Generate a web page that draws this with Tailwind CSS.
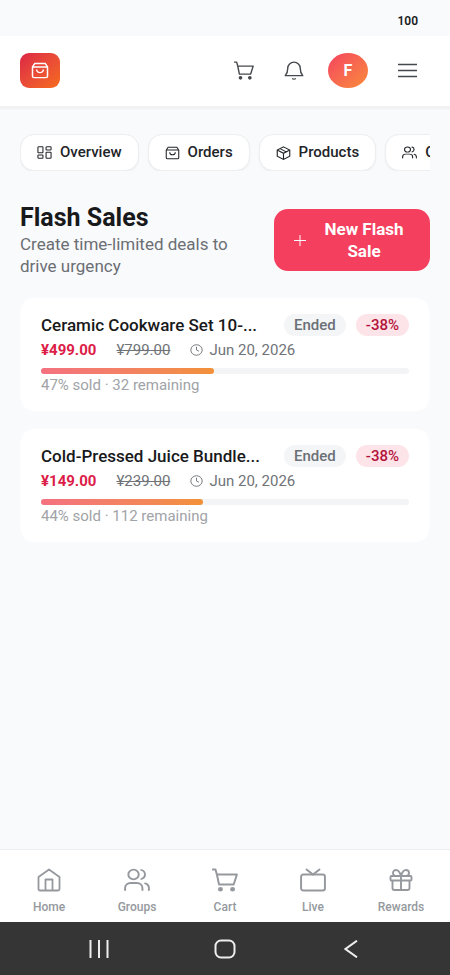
<!DOCTYPE html>
<html lang="en">
<head>
<meta charset="utf-8">
<meta name="viewport" content="width=device-width, initial-scale=1">
<title>Flash Sales</title>
<script src="https://cdn.jsdelivr.net/npm/@tailwindcss/browser@4"></script>
</head>
<body class="bg-[#f9fafc] font-[Roboto,sans-serif] text-[#18191b]">
<svg class="hidden" aria-hidden="true">
  <symbol id="bag" viewBox="0 0 24 24" preserveAspectRatio="none"><path d="M5 2h14l3 5v13a2 2 0 0 1-2 2H4a2 2 0 0 1-2-2V7zM2 7h20M7.500 10.500a4.500 4.500 0 0 0 9 0"/></symbol>
  <symbol id="cart" viewBox="0 0 24 24" preserveAspectRatio="none"><path d="M.5 1.500h2.700l1.300 5L6.500 16.500h13.500L23 6.500H4.500" stroke-linejoin="round" stroke-linecap="round"/><circle cx="7.800" cy="21.300" r="1.400" fill="currentColor"/><circle cx="19" cy="21.300" r="1.400" fill="currentColor"/></symbol>
  <symbol id="users" viewBox="0 0 24 24" preserveAspectRatio="none"><circle cx="8.800" cy="6.500" r="4.800"/><path d="M1 22v-2a5 5 0 0 1 5-5h6a5 5 0 0 1 5 5v2M16 2a4.700 4.700 0 0 1 0 9M19.500 15.300a5 5 0 0 1 3.500 4.700v2" stroke-linecap="round"/></symbol>
  <symbol id="clock" viewBox="0 0 24 24" preserveAspectRatio="none"><circle cx="12" cy="12" r="10.500"/><path d="M12 5.500V12l4.500 2.500"/></symbol>
</svg>
<div class="flex min-h-screen flex-col">
  <div class="flex h-9 items-center justify-end px-8 pt-[6px] text-[12px] font-semibold">100</div>
  <header class="flex items-center justify-between border-b-2 border-[#f0f2f4] bg-white px-5 pt-[17px] pb-[18px] shadow-xs">
    <a href="#" aria-label="Shop home" class="flex h-[35px] w-10 items-center justify-center rounded-[9px] bg-linear-to-br from-[#dc2344] to-[#f66a18] text-white">
      <svg class="h-[17px] w-[18px] fill-none stroke-current stroke-2"><use href="#bag"/></svg>
    </a>
    <div class="flex items-center text-[#45484d]">
      <button aria-label="Cart" class="mr-[30px] flex h-[35px] w-5 items-center justify-center"><svg class="h-[19px] w-5 fill-none stroke-current stroke-[1.7]"><use href="#cart"/></svg></button>
      <button aria-label="Notifications" class="mr-6 flex h-[35px] w-5 items-center justify-center"><svg class="h-[19px] w-5 fill-none stroke-current stroke-[1.7]" viewBox="0 0 24 24" preserveAspectRatio="none"><path d="M1.500 18.500c2.500-3 3-5 3-9.500a7.500 7.500 0 0 1 15 0c0 4.500.5 6.500 3 9.500zM9.800 22a3 3 0 0 0 4.400 0" stroke-linejoin="round"/></svg></button>
      <button aria-label="Account" class="mr-[30px] h-[35px] w-10 rounded-[50%] bg-linear-to-br from-[#f43f5e] to-[#f98a35] text-base font-bold text-white">F</button>
      <button aria-label="Menu" class="mr-[13px] flex h-[35px] w-[19px] items-center justify-center"><svg class="h-[15px] w-[19px] fill-none stroke-current stroke-[1.4]" viewBox="0 0 19 15"><path d="M0 1.500h19M0 7.500h19M0 13.500h19"/></svg></button>
    </div>
  </header>

  <main class="flex-1 px-5 pt-[26px]">
    <nav aria-label="Store sections" class="flex gap-[9px] overflow-hidden text-[15px] font-medium text-[#222428]">
      <a href="#" class="flex h-[37px] shrink-0 items-center gap-2 rounded-[14px] border border-[#eceef0] bg-white px-4 shadow-xs"><svg class="h-[13px] w-[15px] fill-none stroke-current stroke-[1.7]" viewBox="0 0 24 24" preserveAspectRatio="none"><rect x="1.500" y="1.500" width="8" height="11" rx="1"/><rect x="14.500" y="1.500" width="8" height="6" rx="1"/><rect x="14.500" y="11.500" width="8" height="11" rx="1"/><rect x="1.500" y="16.500" width="8" height="6" rx="1"/></svg>Overview</a>
      <a href="#" class="flex h-[37px] shrink-0 items-center gap-2 rounded-[14px] border border-[#eceef0] bg-white px-4 shadow-xs"><svg class="h-[14px] w-[15px] fill-none stroke-current stroke-[1.7]"><use href="#bag"/></svg>Orders</a>
      <a href="#" class="flex h-[37px] shrink-0 items-center gap-2 rounded-[14px] border border-[#eceef0] bg-white px-4 shadow-xs"><svg class="h-[14px] w-[15px] fill-none stroke-current stroke-[1.8]" viewBox="0 0 24 24" preserveAspectRatio="none"><path d="M12 1.500 22 7v10.500L12 23 2 17.500V7zM2 7l10 5.500L22 7M12 12.500V23M6.500 4.500l10.500 6"/></svg>Products</a>
      <a href="#" class="flex h-[37px] shrink-0 items-center gap-2 rounded-[14px] border border-[#eceef0] bg-white px-4 shadow-xs"><svg class="h-[13px] w-[15px] fill-none stroke-current stroke-[1.8]"><use href="#users"/></svg>Customers</a>
    </nav>

    <section class="mt-8 flex items-center justify-between gap-6">
      <div>
        <h1 class="text-[25px] leading-[30px] font-bold">Flash Sales</h1>
        <p class="text-[17px] leading-[22px] text-[#6b6e73]">Create time-limited deals to drive urgency</p>
      </div>
      <button class="flex w-[156px] shrink-0 items-center gap-3 rounded-[14px] bg-[#f43f5e] px-5 py-[9px] text-[17px] leading-[22px] font-bold text-white">
        <svg class="h-[11px] w-3 shrink-0 fill-none stroke-current stroke-1" viewBox="0 0 12 11" aria-hidden="true"><path d="M6 0v11M0 5.500h12"/></svg>
        <span class="flex-1">New Flash Sale</span>
      </button>
    </section>

    <div class="mt-5 flex flex-col gap-4">
      <article class="rounded-[14px] border border-[#fbfcfd] bg-white px-5 pt-4 pb-[15px]">
        <div class="flex h-[22px] items-center gap-[10px] text-[15px] font-medium">
          <h2 class="min-w-0 flex-1 truncate text-[17px] leading-[22px] font-medium">Ceramic Cookware Set 10-...</h2>
          <span class="rounded-full bg-[#f4f5f6] px-[10px] leading-[22px] text-[#6b7077]">Ended</span>
          <span class="rounded-full bg-[#fde4e8] px-[10px] leading-[22px] text-[#b3123b]">-38%</span>
        </div>
        <div class="mt-1 flex items-center gap-5 text-[15px] leading-5 text-[#707378]">
          <span class="font-bold text-[#dc1d48]">¥499.00</span>
          <s>¥799.00</s>
          <span class="flex items-center gap-[6px]"><svg class="h-3 w-[13px] fill-none stroke-current stroke-[1.8]"><use href="#clock"/></svg>Jun 20, 2026</span>
        </div>
        <div class="mt-2 h-[6px] rounded-full bg-[#f3f4f5]"><div class="h-full rounded-full bg-linear-to-r from-[#f4717f] to-[#f29139]" style="width:47%"></div></div>
        <p class="text-[15px] leading-[22px] text-[#a0a3a7]">47% sold · 32 remaining</p>
      </article>
      <article class="rounded-[14px] border border-[#fbfcfd] bg-white px-5 pt-4 pb-[15px]">
        <div class="flex h-[22px] items-center gap-[10px] text-[15px] font-medium">
          <h2 class="min-w-0 flex-1 truncate text-[17px] leading-[22px] font-medium">Cold-Pressed Juice Bundle...</h2>
          <span class="rounded-full bg-[#f4f5f6] px-[10px] leading-[22px] text-[#6b7077]">Ended</span>
          <span class="rounded-full bg-[#fde4e8] px-[10px] leading-[22px] text-[#b3123b]">-38%</span>
        </div>
        <div class="mt-1 flex items-center gap-5 text-[15px] leading-5 text-[#707378]">
          <span class="font-bold text-[#dc1d48]">¥149.00</span>
          <s>¥239.00</s>
          <span class="flex items-center gap-[6px]"><svg class="h-3 w-[13px] fill-none stroke-current stroke-[1.8]"><use href="#clock"/></svg>Jun 20, 2026</span>
        </div>
        <div class="mt-2 h-[6px] rounded-full bg-[#f3f4f5]"><div class="h-full rounded-full bg-linear-to-r from-[#f4717f] to-[#f29139]" style="width:44%"></div></div>
        <p class="text-[15px] leading-[22px] text-[#a0a3a7]">44% sold · 112 remaining</p>
      </article>
    </div>
  </main>

  <nav aria-label="Main" class="grid grid-cols-5 border-t border-[#eceef0] bg-white px-[5px] pt-[18px] pb-[7px] text-[12px] leading-4 font-medium text-[#95999e]">
    <a href="#" class="flex flex-col items-center gap-[7px]"><svg class="h-6 w-6 fill-none stroke-current stroke-[1.8]" viewBox="0 0 24 24" preserveAspectRatio="none"><path d="M1.500 9 12 1.500 22.500 9v12a1.500 1.500 0 0 1-1.500 1.500H3A1.500 1.500 0 0 1 1.500 21zM8.500 22.500v-11h7v11" stroke-linejoin="round"/></svg>Home</a>
    <a href="#" class="flex flex-col items-center gap-[7px]"><svg class="h-6 w-[26px] fill-none stroke-current stroke-[1.8]"><use href="#users"/></svg>Groups</a>
    <a href="#" class="flex flex-col items-center gap-[7px]"><svg class="h-6 w-[26px] fill-none stroke-current stroke-[1.8]"><use href="#cart"/></svg>Cart</a>
    <a href="#" class="flex flex-col items-center gap-[7px]"><svg class="h-6 w-[26px] fill-none stroke-current stroke-[1.8]" viewBox="0 0 24 24" preserveAspectRatio="none"><rect x="1" y="6.500" width="22" height="16" rx="2"/><path d="m6 1.500 6 5 6-5" stroke-linecap="round"/></svg>Live</a>
    <a href="#" class="flex flex-col items-center gap-[7px]"><svg class="h-6 w-6 fill-none stroke-current stroke-[1.9]" viewBox="0 0 24 24" preserveAspectRatio="none"><rect x="1.500" y="8" width="21" height="4.500" rx="1"/><path d="M3.500 12.500V20a2 2 0 0 0 2 2h13a2 2 0 0 0 2-2v-7.500M12 8v14M7 8a3 3 0 0 1 0-6c2.500 0 4 2.500 5 6 1-3.500 2.500-6 5-6a3 3 0 0 1 0 6"/></svg>Rewards</a>
  </nav>
  <div class="grid h-[53px] grid-cols-3 items-center justify-items-center bg-[#353535] px-9 text-[#eeeeee]">
    <button aria-label="Recent apps"><svg class="h-[18px] w-5 fill-none stroke-current stroke-2" viewBox="0 0 20 18"><path d="M1.500 0v18M10 0v18M18.500 0v18"/></svg></button>
    <button aria-label="Home screen"><svg class="h-5 w-[22px] fill-none stroke-current stroke-2" viewBox="0 0 22 20"><rect x="1.500" y="1.500" width="19" height="17" rx="5.500"/></svg></button>
    <button aria-label="Back"><svg class="h-[18px] w-[14px] fill-none stroke-current stroke-2" viewBox="0 0 14 18"><path d="M13 .7 1.500 9 13 17.300"/></svg></button>
  </div>
</div>
</body>
</html>
